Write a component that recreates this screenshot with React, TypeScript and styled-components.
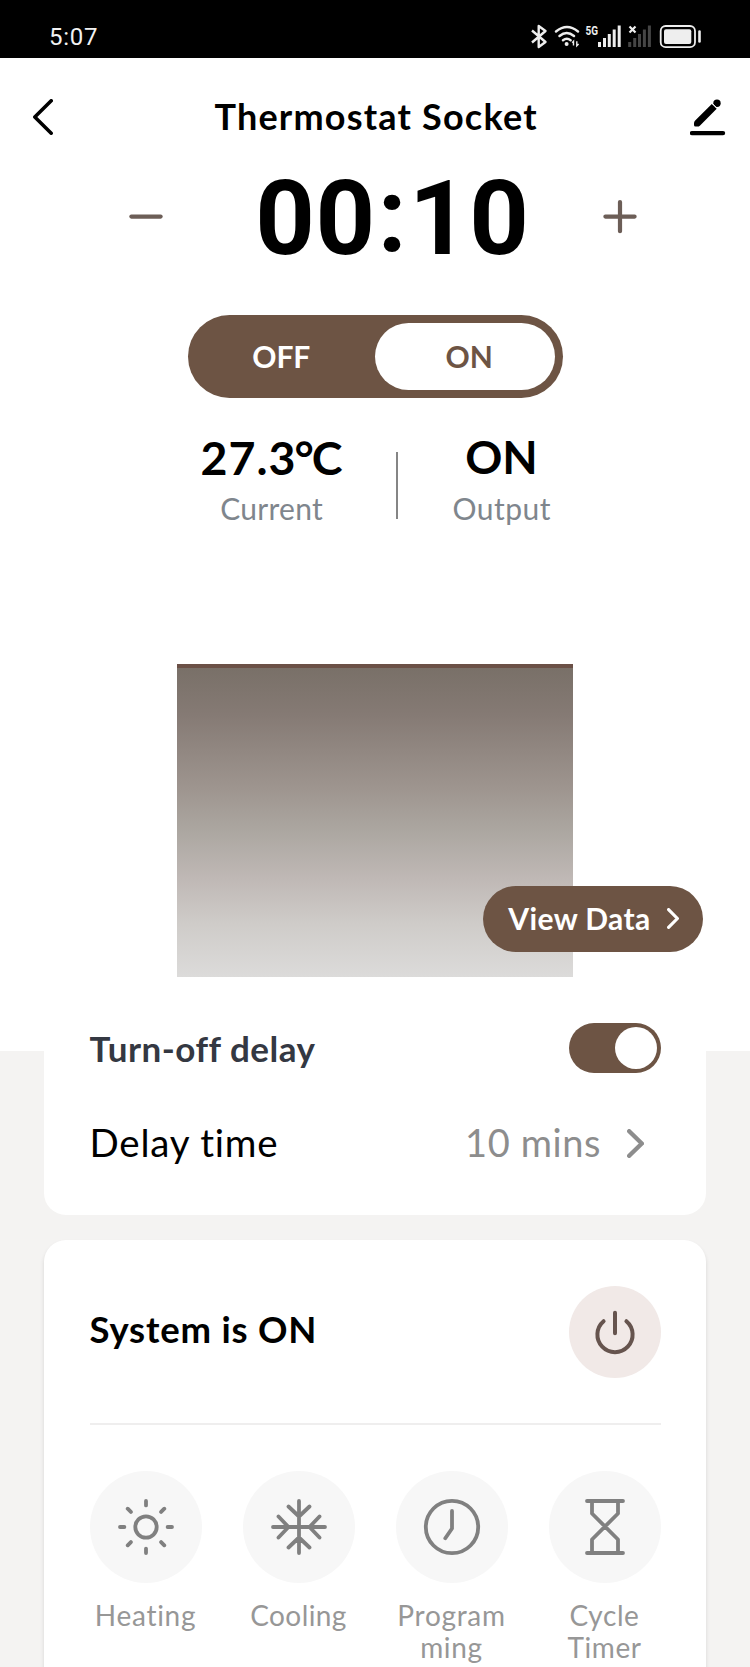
import React from "react";
import styled, { createGlobalStyle } from "styled-components";

const brown = "#6d5444";

const GlobalStyle = createGlobalStyle`
  * { box-sizing: border-box; }
  body { margin: 0; background: #f4f3f2; }
`;

const Screen = styled.div`
  width: 750px;
  height: 1667px;
  overflow: hidden;
  background: #f4f3f2;
  font-family: Lato, "Noto Sans", sans-serif;
  color: #000;
`;

const Text = styled.span<{ $size: number; $weight?: number; $spacing?: number; $color?: string; $line?: number; $lift?: number }>`
  display: block;
  font-family: Lato, "Noto Sans", sans-serif;
  font-size: ${(p) => p.$size}px;
  font-weight: ${(p) => p.$weight ?? 400};
  letter-spacing: ${(p) => p.$spacing ?? 0}px;
  margin: 0 ${(p) => -(p.$spacing ?? 0)}px 0 0;
  padding-bottom: ${(p) => (p.$lift ?? 0) * 2}px;
  color: ${(p) => p.$color ?? "#000"};
  line-height: ${(p) => p.$line ?? 44}px;
  white-space: nowrap;
`;

const StatusBar = styled.header`
  display: flex;
  justify-content: space-between;
  align-items: center;
  height: 58px;
  padding: 15px 48px 0 49px;
  background: #000;
`;

const Clock = styled.time`
  font: 400 24px/28px Roboto, sans-serif;
  letter-spacing: 0.7px;
  color: #f2f2f2;
`;

const Hero = styled.main`
  height: 993px;
  background: #fff;
`;

const TitleBar = styled.div`
  display: grid;
  grid-template-columns: 60px 1fr 60px;
  align-items: center;
  justify-items: center;
  height: 118px;
  padding: 0 12px 0 13px;
`;

const TimerRow = styled.div`
  display: flex;
  align-items: center;
  justify-content: space-between;
  height: 82px;
  padding: 0 111px 0 127px;
`;

const TimerValue = styled.div`
  display: flex;
  margin-left: 19px;
  padding-top: 4px;
  font: 700 104px/82px Roboto, sans-serif;
  letter-spacing: 0.7px;
`;

const Colon = styled.span`
  width: 33px;
  text-align: center;
  margin-top: -3px;
`;

const Segmented = styled.div`
  display: grid;
  grid-template-columns: 187.5px 179.5px;
  width: 375px;
  height: 83px;
  margin: 56.5px auto 0;
  padding: 8px 8px 8px 0;
  border-radius: 42px;
  background: ${brown};
`;

const Segment = styled.button<{ $active?: boolean }>`
  display: flex;
  align-items: center;
  justify-content: center;
  border: 0;
  padding: 0 0 0 ${(p) => (p.$active ? 9 : 0)}px;
  border-radius: 34px;
  font: 700 30px/40px Lato, sans-serif;
  background: ${(p) => (p.$active ? "#fff" : "transparent")};
  color: ${(p) => (p.$active ? brown : "#fff")};
`;

const Readings = styled.div`
  display: grid;
  grid-template-columns: 200px 51px 158px;
  justify-items: center;
  margin: 31px 0 0 171.5px;
  height: 97px;
`;

const Reading = styled.div`
  display: flex;
  flex-direction: column;
  align-items: center;
  gap: 5px;
`;

const Divider = styled.i`
  width: 2px;
  height: 67px;
  margin-top: 23px;
  background: #858585;
`;

const Degree = styled.span`
  margin: 0 -3px 0 -2px;
`;

const Chart = styled.section`
  position: relative;
  width: 395.5px;
  height: 313px;
  margin: 138px auto 0;
  border-top: 4px solid #6b5046;
  background: linear-gradient(#797068 0%, #857a74 15%, #9e958f 39%, #aca7a1 53%, #bfb8b5 68%, #cfccc9 83%, #dcdbda 100%);
`;

const ViewData = styled.button`
  position: absolute;
  left: 306px;
  top: 218px;
  display: flex;
  align-items: center;
  justify-content: space-between;
  width: 220px;
  height: 66.5px;
  padding: 0 24px 1px 25px;
  border: 0;
  border-radius: 34px;
  background: ${brown};
`;

const Card = styled.section<{ $overlap?: boolean }>`
  position: relative;
  width: 662px;
  margin: ${(p) => (p.$overlap ? "-56px" : "25px")} auto 0;
  padding: ${(p) => (p.$overlap ? "0 45.5px 29px" : "45.5px 45.5px 0")};
  height: ${(p) => (p.$overlap ? "220px" : "460px")};
  border-radius: 22px;
  background: #fff;
  box-shadow: ${(p) => (p.$overlap ? "none" : "0 3px 4px rgba(0, 0, 0, 0.12)")};
`;

const Row = styled.div<{ $height: number; $right?: number }>`
  display: flex;
  align-items: center;
  justify-content: space-between;
  height: ${(p) => p.$height}px;
  padding-right: ${(p) => p.$right ?? 0}px;
`;

const Inline = styled.div`
  display: flex;
  align-items: center;
  gap: 26px;
`;

const Switch = styled.button`
  display: flex;
  justify-content: flex-end;
  align-items: center;
  width: 91.5px;
  height: 50px;
  padding: 0 4px;
  border: 0;
  border-radius: 25px;
  background: ${brown};
`;

const Knob = styled.span`
  width: 42px;
  height: 42px;
  border-radius: 50%;
  background: #fff;
`;

const RoundButton = styled.button<{ $size: number; $tint: string }>`
  display: grid;
  place-items: center;
  width: ${(p) => p.$size}px;
  height: ${(p) => p.$size}px;
  padding: 0;
  border: 0;
  border-radius: 50%;
  background: ${(p) => p.$tint};
`;

const Rule = styled.hr`
  height: 2px;
  margin: 45.5px 0 46px;
  border: 0;
  background: #efeeee;
`;

const Modes = styled.nav`
  display: flex;
  justify-content: space-between;
`;

const Mode = styled.div`
  display: flex;
  flex-direction: column;
  align-items: center;
  gap: 16px;
  width: 112px;
`;

const ModeLabel = styled.span<{ $spacing: number }>`
  font-size: 28px;
  line-height: 32px;
  letter-spacing: ${(p) => p.$spacing}px;
  color: #979797;
  text-align: center;
  white-space: pre-line;
`;

const StatusIcons = () => (
  <svg width="172" height="26" viewBox="530 24 172 26" fill="none" stroke="#eee">
    <path d="M532 30.500 545.500 42 538.700 47V26l6.800 5L532 42.500" strokeWidth="2.400" strokeLinejoin="round" />
    <g strokeWidth="2.400" strokeLinecap="round">
      <path d="M556 31.500q11-9 22 0M559.500 36q7.200-6 14.500 0M563 40.300q3.800-3 7.600 0" />
    </g>
    <circle cx="566.600" cy="44" r="2" fill="#eee" stroke="none" />
    <path d="M573.500 45.500v-4.200l-1.300 1.400M576.800 41.200v4.600l1.800-1.700" strokeWidth="1.400" />
    <text x="585.500" y="35" fill="#eee" stroke="none" fontFamily="Roboto" fontWeight="700" fontSize="12.500" textLength="12.500" lengthAdjust="spacingAndGlyphs">5G</text>
    <g strokeWidth="3">
      <path d="M599.500 47v-5M604.500 47v-9M609.300 47V34M614.200 47V29.500M619.200 47V25.500" />
      <path stroke="#454545" d="M629.700 47v-5M634.700 47v-9M639.500 47V34M644.400 47V29.500M649.400 47V25.500" />
    </g>
    <path d="m629.500 26.500 6 6m0-6-6 6" strokeWidth="2.200" />
    <rect x="660.700" y="26" width="34.300" height="21.200" rx="5" strokeWidth="1.800" />
    <rect x="664" y="29.300" width="27.300" height="14.600" rx="2" fill="#eee" stroke="none" />
    <path d="M699.500 31.500v10" strokeWidth="2.600" strokeLinecap="round" />
  </svg>
);

const Chevron = ({ w, h, color, stroke, left }: { w: number; h: number; color: string; stroke: number; left?: boolean }) => {
  const s = stroke / 2;
  const d = left ? `M${w - s} ${s} ${s} ${h / 2} ${w - s} ${h - s}` : `M${s} ${s} ${w - s} ${h / 2} ${s} ${h - s}`;
  return (
    <svg width={w} height={h} fill="none" stroke={color} strokeWidth={stroke} strokeLinecap="round" strokeLinejoin="round">
      <path d={d} />
    </svg>
  );
};

const EditIcon = () => (
  <svg width="36" height="37" viewBox="690 98.500 36 37" fill="#000">
    <path d="M692 132.600h31" stroke="#000" strokeWidth="4.400" strokeLinecap="round" />
    <path d="m711.800 103.400 4.900 4.900-16.600 16.600q-1.200 1.200-2.800 1.200h-1.800q-1.500 0-1.500-1.500v-1.900q0-1.500 1.200-2.700z" />
    <circle cx="717" cy="102.800" r="3.700" />
    <path d="m712 102.600 5.200 5.200" stroke="#fff" strokeWidth="1" />
  </svg>
);

const StepIcon = ({ plus }: { plus?: boolean }) => (
  <svg width="38" height="38" stroke="#6c5e57" strokeWidth="4.200" strokeLinecap="round">
    <path d={plus ? "M4.400 18.600h29.200M19 4v29.200" : "M4.400 18.600h29.200"} />
  </svg>
);

const PowerIcon = () => (
  <svg width="50" height="50" fill="none" stroke="#66544e" strokeWidth="4" strokeLinecap="round">
    <path d="M25 5.800v20.500M13.600 14.200a17.600 17.600 0 1 0 22.800 0" />
  </svg>
);

const glyphs: Record<string, React.ReactNode> = {
  heating: (
    <>
      <circle cx="30" cy="30" r="10.700" />
      <path d="M30 4v4.400M30 51.600V56M4 30h4.400M51.600 30H56M11.700 11.700l3.200 3.200M45.100 45.100l3.200 3.200M11.700 48.300l3.200-3.200M45.100 14.900l3.200-3.200" />
    </>
  ),
  cooling: (
    <path d="M30 4v52M4 30h52M19.500 9.500 30 19.500 40.500 9.500M19.500 50.500 30 40.500l10.500 10M9.500 19.500 19.500 30 9.500 40.500M50.500 19.500 40.500 30l10 10.500" />
  ),
  program: (
    <>
      <circle cx="30" cy="30" r="26.200" />
      <path d="M30 14v17.500l-6.700 9.800" />
    </>
  ),
  cycle: (
    <path d="M12 4h36M12 56h36M17 5v11.500L43 42.500V55M43 5v11.500L17 42.500V55" />
  ),
};

const modes = [
  { id: "heating", label: "Heating", spacing: 0.7 },
  { id: "cooling", label: "Cooling", spacing: 0.4 },
  { id: "program", label: "Program\nming", spacing: 0.7 },
  { id: "cycle", label: "Cycle\nTimer", spacing: 0.6 },
];

export default function App() {
  return (
    <Screen>
      <GlobalStyle />
      <StatusBar>
        <Clock>5:07</Clock>
        <StatusIcons />
      </StatusBar>
      <Hero>
        <TitleBar>
          <Chevron left w={20} h={36} stroke={3.6} color="#000" />
          <Text as="h1" $size={36} $weight={700} $spacing={1.2} $lift={1}>Thermostat Socket</Text>
          <EditIcon />
        </TitleBar>
        <TimerRow>
          <StepIcon />
          <TimerValue>00<Colon>:</Colon>10</TimerValue>
          <StepIcon plus />
        </TimerRow>
        <Segmented>
          <Segment>OFF</Segment>
          <Segment $active>ON</Segment>
        </Segmented>
        <Readings>
          <Reading>
            <Text $size={46.5} $weight={700} $spacing={1} $line={56}>27.3<Degree>°</Degree>C</Text>
            <Text $size={30} $spacing={0.3} $line={36} $color="#7f868d">Current</Text>
          </Reading>
          <Divider />
          <Reading>
            <Text $size={46} $weight={700} $line={56}>ON</Text>
            <Text $size={30} $spacing={0.5} $line={36} $color="#7f868d">Output</Text>
          </Reading>
        </Readings>
        <Chart>
          <ViewData>
            <Text $size={30} $weight={700} $spacing={0.4} $color="#fff">View Data</Text>
            <Chevron w={12} h={21} stroke={3.2} color="#fff" />
          </ViewData>
        </Chart>
      </Hero>
      <Card $overlap>
        <Row $height={106}>
          <Text $size={35} $weight={700} $spacing={0.5} $color="#343842">Turn-off delay</Text>
          <Switch><Knob /></Switch>
        </Row>
        <Row $height={85} $right={17}>
          <Text $size={38.5} $spacing={0.8} $lift={2}>Delay time</Text>
          <Inline>
            <Text $size={38} $spacing={0.6} $color="#8d8d8d" $lift={2}>10 mins</Text>
            <Chevron w={17} h={29} stroke={4.4} color="#8d8d8d" />
          </Inline>
        </Row>
      </Card>
      <Card>
        <Row $height={92}>
          <Text $size={36.5} $weight={700} $spacing={0.8} $lift={2.5}>System is ON</Text>
          <RoundButton $size={92} $tint="#f1e9e7"><PowerIcon /></RoundButton>
        </Row>
        <Rule />
        <Modes>
          {modes.map((m) => (
            <Mode key={m.id}>
              <RoundButton $size={112} $tint="#f7f7f7">
                <svg width="60" height="60" fill="none" stroke="#808080" strokeWidth="3.800" strokeLinecap="round" strokeLinejoin="round">
                  {glyphs[m.id]}
                </svg>
              </RoundButton>
              <ModeLabel $spacing={m.spacing}>{m.label}</ModeLabel>
            </Mode>
          ))}
        </Modes>
      </Card>
    </Screen>
  );
}
